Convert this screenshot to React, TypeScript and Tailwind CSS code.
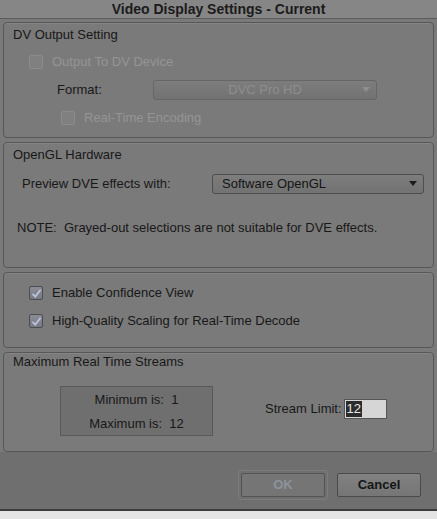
import React from "react";

// Avid-style "Video Display Settings" dialog, dimmed grey theme.

function Box({ checked, disabled }: { checked?: boolean; disabled?: boolean }) {
  if (disabled) {
    return <span className="block w-[14px] h-[14px] rounded-[2px] border border-[#8c8c8c] bg-[#808080] shrink-0" />;
  }
  return (
    <span className="flex items-center justify-center w-[14px] h-[14px] rounded-[2px] border border-[#4b4d55] bg-gradient-to-b from-[#8a8d96] to-[#777a82] shrink-0">
      {checked && (
        <svg width="11" height="11" viewBox="0 0 11 11">
          <path d="M1.5 5.8 L4.3 8.6 L9.6 1.8" fill="none" stroke="#b9c3dc" strokeWidth="1.8" />
        </svg>
      )}
    </span>
  );
}

function Select({ label, disabled, className }: { label: string; disabled?: boolean; className: string }) {
  return (
    <div
      className={`relative flex items-center h-[20px] rounded-[3px] border bg-gradient-to-b from-[#7d7d7d] to-[#727272] ${
        disabled ? "border-[#666] justify-center text-[#8e8e8e]" : "border-[#4e4e4e] pl-[9px] text-[#141414]"
      } ${className}`}
    >
      <span>{label}</span>
      <svg className="absolute right-[6px] top-[6px]" width="8" height="6" viewBox="0 0 8 6">
        <path d="M0 0 H8 L4 5 Z" fill={disabled ? "#8e8e8e" : "#1c1c1c"} />
      </svg>
    </div>
  );
}

function Panel({ className, children }: { className: string; children: React.ReactNode }) {
  return (
    <div className={`rounded-[4px] border border-[#575757] bg-[#7a7a7a] shadow-[inset_0_1px_0_#858585] pl-[9px] ${className}`}>
      {children}
    </div>
  );
}

export default function App() {
  return (
    <div
      className="w-[437px] h-[519px] bg-[#7a7a7a] flex flex-col text-[13px] leading-[16px] text-[#181818] overflow-hidden"
      style={{ fontFamily: '"Liberation Sans", Arial, sans-serif' }}
    >
      <div className="h-[19px] shrink-0 bg-[#868686] border-b border-[#5c5c5c] text-center text-[14px] font-bold text-[#1b1b1b] leading-[18px]">
        Video Display Settings - Current
      </div>

      <div className="flex flex-col gap-[4px] px-[3px] pt-[3px]">
        <Panel className="h-[116px] pt-[4px]">
          <div className="h-[16px]">DV Output Setting</div>
          <div className="mt-[9px] h-[20px] flex items-center ml-[16px] gap-[9px] text-[#959595]">
            <Box disabled />
            <span>Output To DV Device</span>
          </div>
          <div className="mt-[8px] h-[20px] flex items-center ml-[44px]">
            <span className="w-[96px]">Format:</span>
            <Select label="DVC Pro HD" disabled className="w-[224px]" />
          </div>
          <div className="mt-[8px] h-[20px] flex items-center ml-[48px] gap-[9px] text-[#959595]">
            <Box disabled />
            <span>Real-Time Encoding</span>
          </div>
        </Panel>

        <Panel className="h-[126px] pt-[4px]">
          <div className="h-[16px]">OpenGL Hardware</div>
          <div className="mt-[11px] h-[20px] flex items-center ml-[9px]">
            <span className="w-[190px]">Preview DVE effects with:</span>
            <Select label="Software OpenGL" className="w-[212px]" />
          </div>
          <div className="mt-[26px] h-[16px] ml-[4px]">NOTE:&nbsp; Grayed-out selections are not suitable for DVE effects.</div>
        </Panel>

        <Panel className="h-[76px] pt-[10px]">
          <div className="h-[20px] flex items-center ml-[16px] gap-[9px]">
            <Box checked />
            <span>Enable Confidence View</span>
          </div>
          <div className="mt-[8px] h-[20px] flex items-center ml-[16px] gap-[9px]">
            <Box checked />
            <span>High-Quality Scaling for Real-Time Decode</span>
          </div>
        </Panel>

        <Panel className="h-[100px] pt-[1px]">
          <div className="h-[16px]">Maximum Real Time Streams</div>
          <div className="mt-[16px] flex items-start">
            <div className="ml-[47px] w-[153px] h-[50px] border border-[#595959] bg-[#6f6f6f] flex flex-col items-center pt-[5px] gap-[8px]">
              <div>Minimum is:&nbsp; 1</div>
              <div>Maximum is:&nbsp; 12</div>
            </div>
            <div className="ml-[52px] mt-[13px] flex items-center gap-[2px]">
              <span>Stream Limit:</span>
              <span className="flex items-center w-[43px] h-[20px] border border-[#555] bg-[#d6d6d6] pl-[1px]">
                <span className="bg-[#2b2b2b] text-[#e8e8e8] h-[16px] leading-[16px] px-[1px]">12</span>
              </span>
            </div>
          </div>
        </Panel>
      </div>

      <div className="flex-1 bg-[#6f6f6f] flex justify-end items-start pt-[21px] pr-[16px] gap-[12px]">
        <div className="p-[2px] rounded-[3px] border border-[#7c7c7c] -mt-[3px] -mr-[3px]">
          <button className="w-[84px] h-[24px] rounded-[2px] border border-[#545454] bg-[#757575] font-bold text-[#8c939c]">
            OK
          </button>
        </div>
        <button className="w-[84px] h-[24px] rounded-[2px] border border-[#4a4a4a] bg-gradient-to-b from-[#818181] to-[#767676] font-bold text-[#151515]">
          Cancel
        </button>
      </div>
      <div className="h-[2px] bg-[#3c3c3c] shrink-0" />
      <div className="h-[8px] bg-[#e4e4e4] shrink-0" />
    </div>
  );
}
